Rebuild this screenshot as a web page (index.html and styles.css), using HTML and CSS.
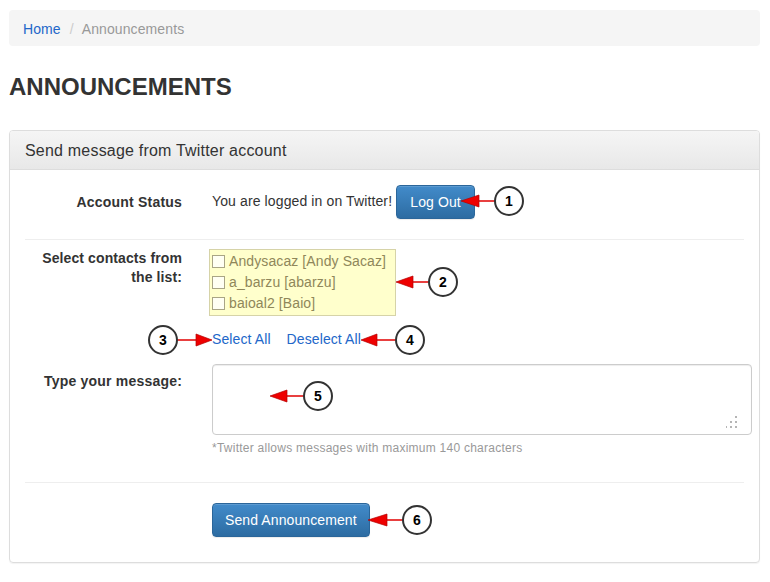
FILE: index.html
```html
<!DOCTYPE html>
<html>
<head>
<meta charset="utf-8">
<link rel="stylesheet" href="styles.css">
</head>
<body>
<div class="page">
  <ol class="breadcrumb">
    <li><a href="#">Home</a></li>
    <li class="sep">/</li>
    <li class="active">Announcements</li>
  </ol>
  <h1 class="title">ANNOUNCEMENTS</h1>
  <div class="panel">
    <div class="panel-heading">Send message from Twitter account</div>
    <div class="panel-body">
      <div class="row row-status">
        <div class="label">Account Status</div>
        <div class="field"><span class="status-text">You are logged in on Twitter!</span> <button class="btn">Log Out</button></div>
      </div>
      <hr class="divider">
      <div class="row row-contacts">
        <div class="label">Select contacts from the list:</div>
        <div class="field">
          <div class="checklist">
            <div class="check-item"><span class="box"></span>Andysacaz [Andy Sacaz]</div>
            <div class="check-item"><span class="box"></span>a_barzu [abarzu]</div>
            <div class="check-item"><span class="box"></span>baioal2 [Baio]</div>
          </div>
          <div class="links"><a href="#">Select All</a><a href="#">Deselect All</a></div>
        </div>
      </div>
      <div class="row row-message">
        <div class="label">Type your message:</div>
        <div class="field">
          <div class="textarea-wrap">
            <textarea class="message"></textarea>
            <svg class="grip" width="14" height="14" viewBox="0 0 14 14">
              <rect x="9" y="0" width="2" height="2"/>
              <rect x="4" y="5" width="2" height="2"/>
              <rect x="9" y="5" width="2" height="2"/>
              <rect x="-1" y="10" width="2" height="2"/>
              <rect x="4" y="10" width="2" height="2"/>
              <rect x="9" y="10" width="2" height="2"/>
            </svg>
          </div>
          <div class="help">*Twitter allows messages with maximum 140 characters</div>
        </div>
      </div>
      <hr class="divider divider-2">
      <div class="row row-submit">
        <div class="label"></div>
        <div class="field"><button class="btn">Send Announcement</button></div>
      </div>
    </div>
  </div>
</div>
<svg class="callouts" width="770" height="582" viewBox="0 0 770 582">
  <!-- 1 -->
  <line x1="478" y1="201" x2="495" y2="201" class="cl"/>
  <polygon points="461,201 479,195 479,207" class="ah"/>
  <circle cx="509" cy="201" r="14" class="cc"/>
  <text x="509" y="206" class="ct">1</text>
  <!-- 2 -->
  <line x1="412" y1="282" x2="429" y2="282" class="cl"/>
  <polygon points="396,282 413,276 413,288" class="ah"/>
  <circle cx="443" cy="282" r="14" class="cc"/>
  <text x="443" y="287" class="ct">2</text>
  <!-- 3 -->
  <line x1="177" y1="340" x2="197" y2="340" class="cl"/>
  <polygon points="212,340 196,334 196,346" class="ah"/>
  <circle cx="163" cy="340" r="14" class="cc"/>
  <text x="163" y="345" class="ct">3</text>
  <!-- 4 -->
  <line x1="376" y1="340" x2="396" y2="340" class="cl"/>
  <polygon points="361,340 377,334 377,346" class="ah"/>
  <circle cx="410" cy="340" r="14" class="cc"/>
  <text x="410" y="345" class="ct">4</text>
  <!-- 5 -->
  <line x1="286" y1="396" x2="304" y2="396" class="cl"/>
  <polygon points="270,396 287,390 287,402" class="ah"/>
  <circle cx="318" cy="396" r="14" class="cc"/>
  <text x="318" y="401" class="ct">5</text>
  <!-- 6 -->
  <line x1="386" y1="520" x2="403" y2="520" class="cl"/>
  <polygon points="368,520 387,514 387,526" class="ah"/>
  <circle cx="417" cy="520" r="14" class="cc"/>
  <text x="417" y="525" class="ct">6</text>
</svg>
</body>
</html>
```
FILE: styles.css
```css
html, body {
  margin: 0;
  padding: 0;
  background: #fff;
}
body {
  font-family: "Liberation Sans", Arial, Helvetica, sans-serif;
  font-size: 14px;
  line-height: 20px;
  letter-spacing: 0.2px;
  color: #333;
  position: relative;
  width: 770px;
  height: 582px;
  overflow: hidden;
}
.page {
  padding: 10px 10px 0 9px;
}
a {
  color: #2267c9;
  text-decoration: none;
}
.breadcrumb {
  list-style: none;
  margin: 0 0 20px 0;
  padding: 9px 14px 7px 14px;
  height: 20px;
  background: #f5f5f5;
  border-radius: 4px;
  display: flex;
  letter-spacing: 0.1px;
}
.breadcrumb li.sep {
  color: #ccc;
  padding: 0 8px 0 9px;
}
.breadcrumb .active {
  color: #999;
}
.title {
  margin: 0 0 20px 0;
  font-size: 24px;
  line-height: 40px;
  font-weight: bold;
  letter-spacing: 0;
  color: #333;
  height: 43px;
  padding-top: 1px;
}
.panel {
  border: 1px solid #ddd;
  border-radius: 4px;
  box-shadow: 0 1px 1px rgba(0,0,0,0.05);
  height: 433px;
  box-sizing: border-box;
}
.panel-heading {
  background: linear-gradient(#f5f5f5, #e8e8e8);
  border-bottom: 1px solid #ddd;
  border-radius: 3px 3px 0 0;
  padding: 11px 15px 9px 15px;
  font-size: 16px;
  line-height: 18px;
  color: #333;
}
.panel-body {
  padding: 15px 15px 0 15px;
}
.row {
  display: grid;
  grid-template-columns: 157px 1fr;
  column-gap: 30px;
}
.label {
  text-align: right;
  font-weight: bold;
  color: #333;
}
.row-status .label {
  padding-top: 7px;
}
.status-text {
  display: inline-block;
  vertical-align: middle;
  margin-top: -2px;
  letter-spacing: 0.12px;
}
.btn {
  font-family: "Liberation Sans", Arial, Helvetica, sans-serif;
  font-size: 14px;
  line-height: 20px;
  letter-spacing: 0.1px;
  color: #fff;
  background: linear-gradient(#428bca, #2d6ca2);
  border: 1px solid #2b669a;
  border-radius: 4px;
  padding: 6px 12px;
  vertical-align: middle;
  box-shadow: inset 0 1px 0 rgba(255,255,255,0.15), 0 1px 1px rgba(0,0,0,0.075);
}
.row-status .btn {
  padding: 6px 13px;
}
.divider {
  border: 0;
  border-top: 1px solid #eee;
  margin: 20px 0 9px 0;
}
.row-contacts .label {
  line-height: 19px;
  letter-spacing: 0.1px;
}
.checklist {
  margin-left: -3px;
  width: 183px;
  border: 1px solid #d6d3a8;
  background: #ffffcc;
  padding: 1px 0 1px 2px;
  color: #8f875a;
  letter-spacing: 0.1px;
}
.check-item {
  height: 21px;
  line-height: 21px;
  display: flex;
  align-items: center;
}
.box {
  display: inline-block;
  width: 11px;
  height: 11px;
  border: 1px solid #a9a585;
  background: #fffff3;
  margin-right: 4px;
}
.links {
  margin-top: 13px;
  height: 20px;
  display: flex;
  gap: 16px;
  letter-spacing: 0.1px;
}
.row-message {
  margin-top: 15px;
}
.row-message .label {
  padding-top: 7px;
}
.textarea-wrap {
  position: relative;
  width: 540px;
  height: 71px;
}
.message {
  display: block;
  width: 540px;
  height: 71px;
  box-sizing: border-box;
  border: 1px solid #ccc;
  border-radius: 4px;
  box-shadow: inset 0 1px 1px rgba(0,0,0,0.075);
  margin: 0;
  resize: none;
  font-family: "Liberation Sans", Arial, sans-serif;
}
.grip {
  position: absolute;
  right: 12px;
  bottom: 5px;
  fill: #b5b5b5;
}
.help {
  margin-top: 5px;
  font-size: 12px;
  line-height: 16px;
  color: #999;
  letter-spacing: 0.25px;
}
.divider-2 {
  margin: 26px 0 20px 0;
}
.callouts {
  position: absolute;
  top: 0;
  left: 0;
  pointer-events: none;
}
.cl {
  stroke: #e00000;
  stroke-width: 1.5;
}
.ah {
  fill: #ee0000;
  stroke: #b30000;
  stroke-width: 0.7;
}
.cc {
  fill: #fff;
  stroke: #333;
  stroke-width: 2;
}
.ct {
  font-family: "Liberation Sans", Arial, sans-serif;
  font-size: 14px;
  font-weight: bold;
  fill: #000;
  text-anchor: middle;
  letter-spacing: 0;
}
```
